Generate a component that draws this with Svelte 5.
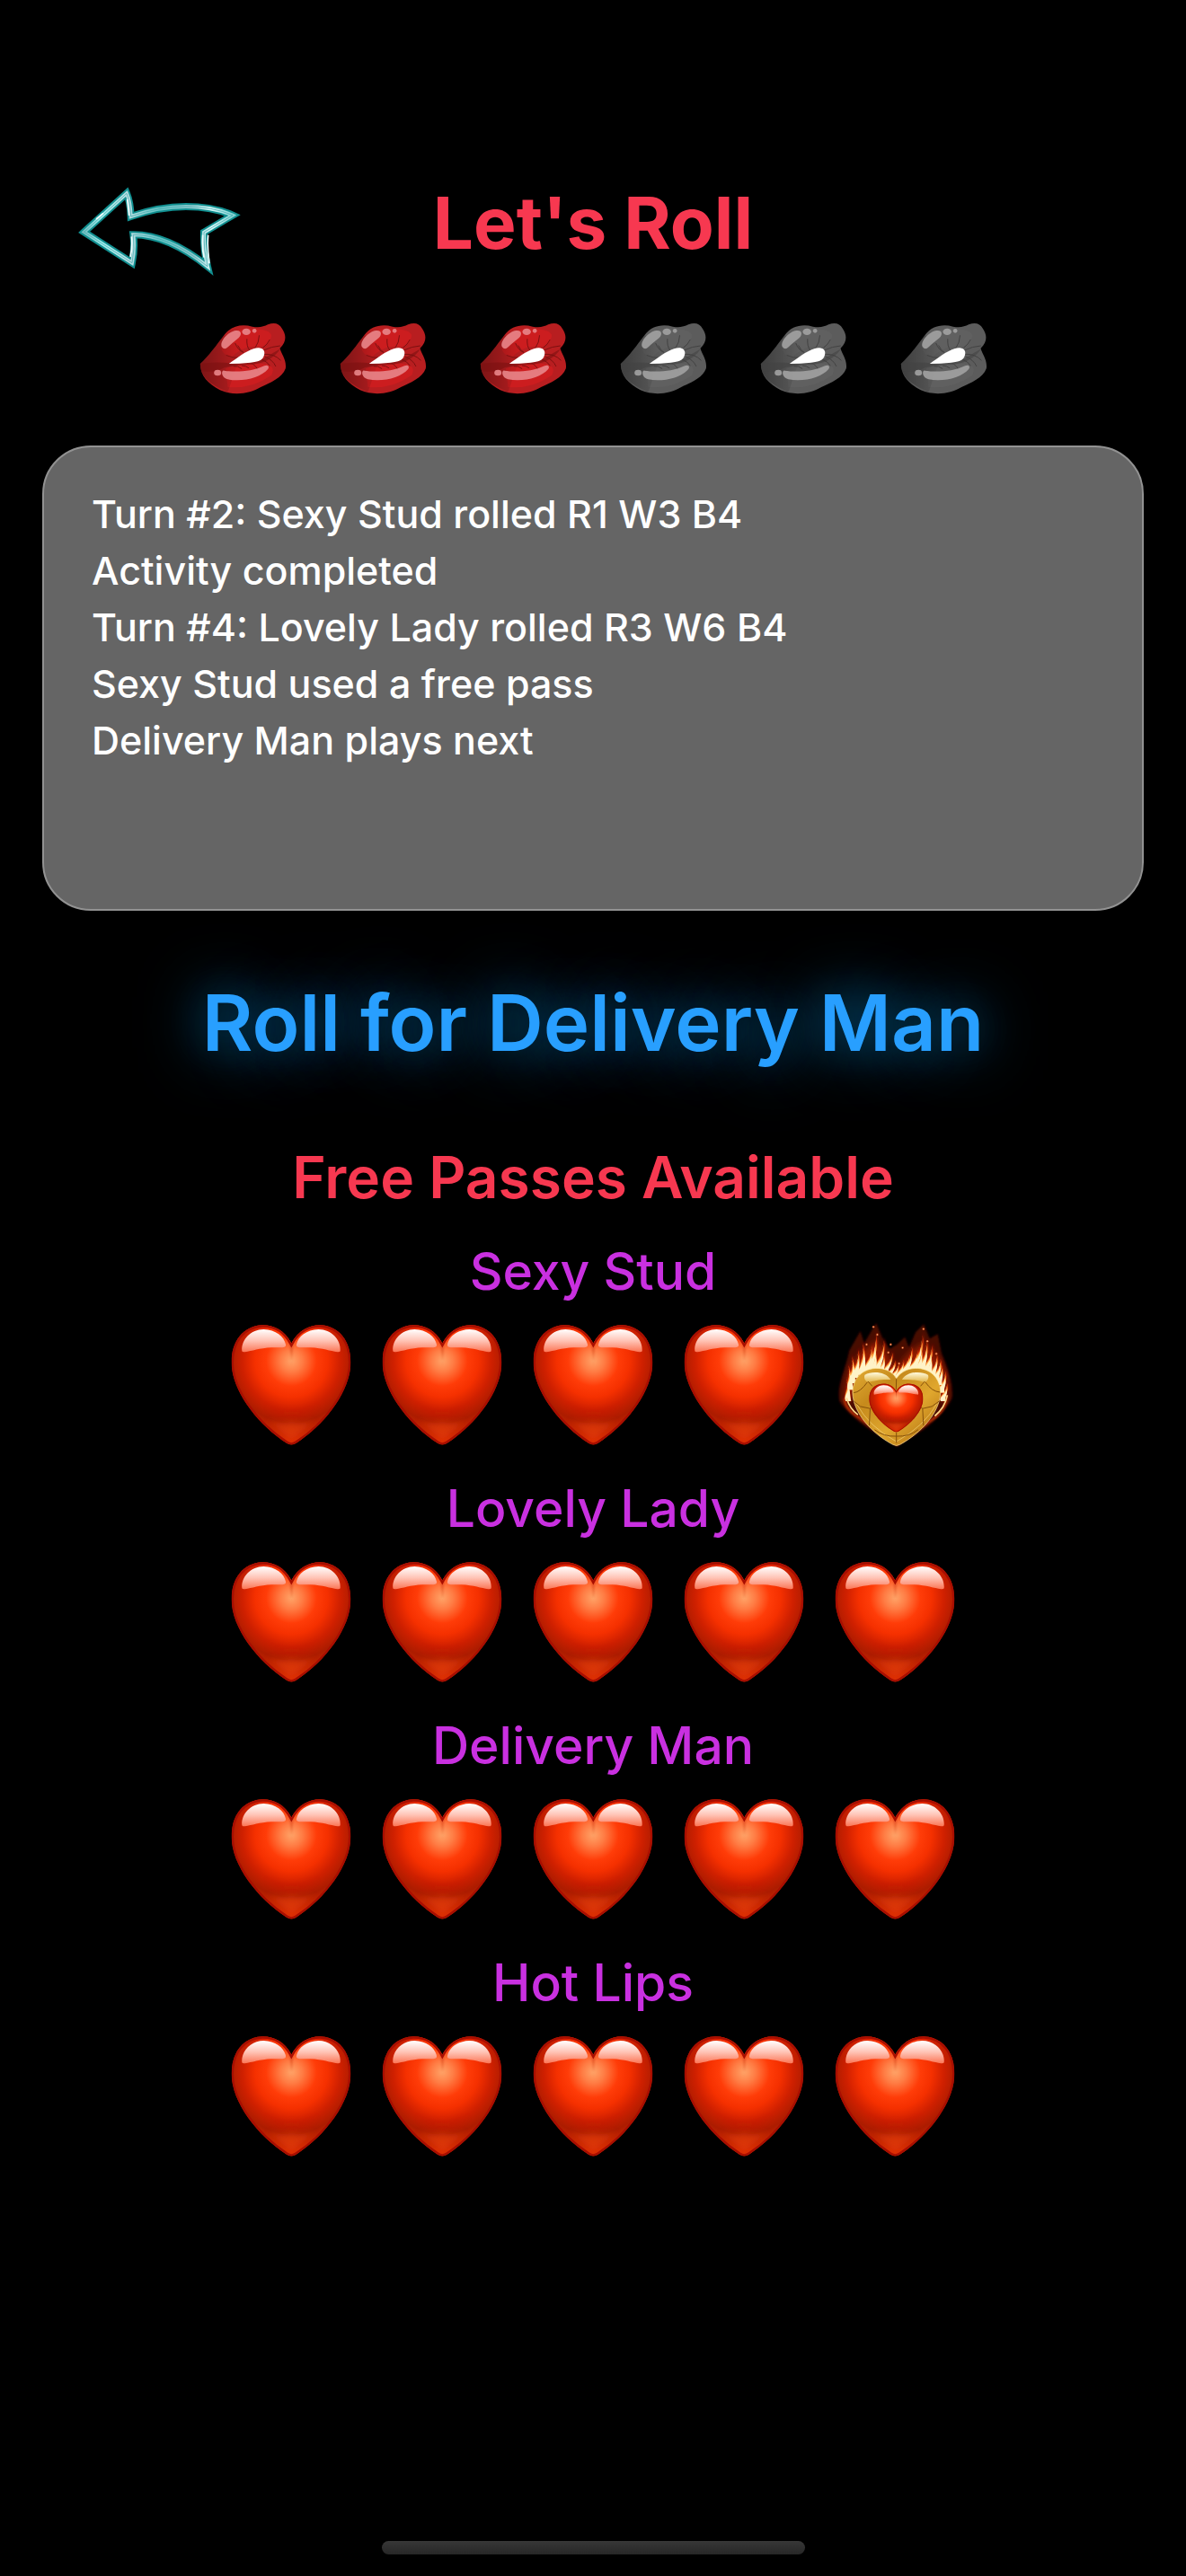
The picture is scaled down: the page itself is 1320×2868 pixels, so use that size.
<script>
    let turn = 3;
    const totalTurns = 6;
    const nextPlayer = 'Delivery Man';

    const log = [
        'Turn #2: Sexy Stud rolled R1 W3 B4',
        'Activity completed',
        'Turn #4: Lovely Lady rolled R3 W6 B4',
        'Sexy Stud used a free pass',
        'Delivery Man plays next'
    ];

    const players = [
        { name: 'Sexy Stud', passes: 4 },
        { name: 'Lovely Lady', passes: 5 },
        { name: 'Delivery Man', passes: 5 },
        { name: 'Hot Lips', passes: 5 }
    ];
    const maxPasses = 5;

    // base x, base y, tip x, tip y, half width
    const flames = [
        [72, 300, 66, 225, 9], [80, 262, 72, 180, 9], [88, 240, 84, 150, 9],
        [98, 222, 104, 128, 9], [110, 212, 126, 142, 8], [122, 206, 120, 108, 9],
        [135, 203, 150, 112, 8], [148, 202, 164, 76, 9], [160, 203, 160, 118, 8],
        [172, 204, 190, 96, 9], [185, 206, 190, 140, 8], [198, 210, 218, 135, 8],
        [212, 216, 228, 162, 8], [224, 222, 240, 172, 7], [240, 222, 256, 160, 8],
        [254, 214, 276, 142, 8], [268, 208, 284, 116, 9], [282, 204, 304, 128, 8],
        [296, 202, 320, 78, 9], [310, 202, 316, 112, 8], [322, 203, 334, 96, 9],
        [334, 206, 352, 112, 8], [346, 210, 346, 134, 8], [358, 218, 368, 142, 8],
        [368, 230, 380, 158, 9], [378, 246, 384, 178, 9], [386, 272, 396, 198, 9],
        [390, 300, 402, 238, 8]
    ];

    const sparks = [[156, 51], [169, 77], [214, 110], [206, 137], [254, 121], [324, 58], [337, 99], [367, 141], [133, 110], [242, 174]];

    function tongue([x, y, tx, ty, w], k) {
        const h = (y - ty) * k;
        const top = y - h;
        const tip = x + (tx - x) * k;
        return `M${x - w} ${y} C${x - w * 2} ${y - h * 0.4} ${tip + w} ${y - h * 0.55} ${tip} ${top}`
            + ` C${tip + w * 1.6} ${y - h * 0.6} ${x + w * 0.3} ${y - h * 0.4} ${x + w} ${y} Z`;
    }
</script>

<svg class="sprites" aria-hidden="true">
    <defs>
        <radialGradient id="heart-body" gradientUnits="userSpaceOnUse" cx="238" cy="165" r="265">
            <stop offset="0" stop-color="#ffa468" />
            <stop offset=".14" stop-color="#ff7c44" />
            <stop offset=".32" stop-color="#ff3c08" />
            <stop offset=".46" stop-color="#f53000" />
            <stop offset=".62" stop-color="#cf2000" />
            <stop offset=".78" stop-color="#ac1c00" />
            <stop offset="1" stop-color="#d92c04" />
        </radialGradient>
        <linearGradient id="heart-gloss" x1="0" y1="0" x2="0" y2="1">
            <stop offset="0" stop-color="#fff" />
            <stop offset=".5" stop-color="#ffc4b6" />
            <stop offset="1" stop-color="#fb7656" />
        </linearGradient>
        <linearGradient id="gold" x1="0" y1="0" x2="1" y2="1">
            <stop offset="0" stop-color="#e3ac35" />
            <stop offset=".3" stop-color="#c68a1c" />
            <stop offset=".6" stop-color="#e0a72e" />
            <stop offset="1" stop-color="#a86409" />
        </linearGradient>
        <linearGradient id="gold-gloss" x1="0" y1="0" x2="0" y2="1">
            <stop offset="0" stop-color="#fffbe0" />
            <stop offset="1" stop-color="#e2b548" />
        </linearGradient>
        <linearGradient id="lip-left">
            <stop offset="0" stop-color="#000" stop-opacity=".32" />
            <stop offset="1" stop-color="#000" stop-opacity="0" />
        </linearGradient>
        <linearGradient id="arrow-glass" gradientUnits="userSpaceOnUse" x1="60" y1="210" x2="590" y2="180">
            <stop offset="0" stop-color="#6fb9bd" />
            <stop offset=".13" stop-color="#9ff0ee" />
            <stop offset=".3" stop-color="#b8dde2" />
            <stop offset=".5" stop-color="#63c4c5" />
            <stop offset=".7" stop-color="#8fc8cc" />
            <stop offset=".82" stop-color="#d9fbfb" />
            <stop offset="1" stop-color="#6cc6c6" />
        </linearGradient>
        <filter id="soft" x="-30%" y="-30%" width="160%" height="160%">
            <feGaussianBlur stdDeviation="12" />
        </filter>
        <filter id="glow" x="-30%" y="-30%" width="160%" height="160%">
            <feGaussianBlur stdDeviation="4" />
        </filter>
        <clipPath id="heart-clip">
            <path d="M238 106 C262 62 300 44 335 45 C400 48 437 100 437 170 C437 265 352 378 254 441 Q238 452 222 441 C124 378 37 265 37 170 C37 100 75 48 140 45 C178 44 215 62 238 106Z" />
        </clipPath>
        <path id="heart-gloss-shape" d="M72 130 C70 94 102 59 145 59 C185 60 214 83 219 110 C221 124 200 119 172 120 C130 122 106 132 82 135 C74 136 72 134 72 130Z" />
    </defs>

    <symbol id="heart" viewBox="36 44 402 404">
        <g clip-path="url(#heart-clip)">
            <rect x="30" y="40" width="420" height="420" fill="url(#heart-body)" />
            <path d="M215 60 Q238 105 240 185 Q236 105 262 60Z" fill="#c22c0a" opacity=".45" filter="url(#glow)" />
            <path d="M150 312 Q238 362 328 312 Q290 344 238 346 Q188 344 150 312Z" fill="#b01400" opacity=".4" filter="url(#soft)" />
            <path d="M160 366 Q205 382 238 368 Q272 382 316 366 L238 430Z" fill="#ec450e" opacity=".55" filter="url(#soft)" />
            <path d="M238 106 C262 62 300 44 335 45 C400 48 437 100 437 170 C437 265 352 378 254 441 Q238 452 222 441 C124 378 37 265 37 170 C37 100 75 48 140 45 C178 44 215 62 238 106Z" fill="none" stroke="#a80e00" stroke-width="14" />
        </g>
        <use href="#heart-gloss-shape" fill="url(#heart-gloss)" />
        <use href="#heart-gloss-shape" transform="matrix(-1 0 0 1 474 0)" fill="url(#heart-gloss)" />
    </symbol>

    <symbol id="burning-heart" viewBox="27 44 402 404" overflow="visible">
        <path d="M233 448 C140 400 70 345 42 300 C32 250 60 200 75 130 L112 65 L125 105 L165 38 L185 85 L210 125 L235 110 L262 85 L275 120 L298 68 L325 42 L345 90 L372 75 L385 140 C405 190 425 240 420 290 C390 350 320 410 233 448Z" fill="#4a0900" filter="url(#glow)" />
        <path d="M60 310 C56 240 80 170 115 140 L160 100 L195 130 L232 190 L275 140 L320 105 L360 140 C395 180 410 250 400 310 L330 240 L233 240 L130 240Z" fill="#a32405" opacity=".8" filter="url(#soft)" />
        <g fill="#a01c03" filter="url(#glow)">
            {#each flames as flame}
                <path d={tongue(flame, 1.1)} />
            {/each}
        </g>
        <path d="M58 290 Q60 325 100 350 L235 448 L370 350 Q405 320 400 280" fill="none" stroke="#e33a08" stroke-width="5" filter="url(#glow)" />
        <g fill="#d93a0c">
            {#each flames as flame}
                <path d={tongue(flame, 1)} />
            {/each}
        </g>
        <g fill="#ffb04a">
            {#each flames as flame}
                <path d={tongue(flame, 0.86)} />
            {/each}
        </g>
        <g fill="#fff3c8">
            {#each flames as flame}
                <path d={tongue(flame, 0.68)} />
            {/each}
        </g>
        <path d="M66 290 Q76 326 104 346 M404 280 Q396 322 362 350" fill="none" stroke="#ffd98c" stroke-width="5" />
        <path d="M233 224 C250 198 278 189 306 190 C355 194 381 230 381 272 C378 340 315 408 245 446 Q233 453 221 446 C150 408 88 340 86 272 C86 230 112 194 162 190 C190 189 218 198 233 224Z" fill="url(#gold)" stroke="#ffe9a0" stroke-width="2" />
        <path d="M100 310 Q140 385 233 436 Q326 385 368 310" fill="none" stroke="#f8dc86" stroke-width="3" opacity=".6" />
        <path d="M127 212 C150 198 198 200 214 228 C180 226 158 232 142 236 C130 238 122 222 127 212Z" fill="url(#gold-gloss)" />
        <path d="M339 212 C316 198 268 200 252 228 C286 226 308 232 324 236 C336 238 344 222 339 212Z" fill="url(#gold-gloss)" />
        <g fill="none" stroke="#85500a" stroke-width="3">
            <path d="M233 226 L232 262 M138 234 L152 250 M136 236 Q112 270 90 272 M328 234 L314 250 M330 236 Q352 268 379 270" />
            <path d="M142 382 L145 325 L112 318 L90 300 M145 325 L156 318 M324 382 L321 325 L352 318 L377 300 M321 325 L310 318" />
            <path d="M160 396 Q190 420 233 418 Q276 420 306 396 M233 405 L233 440" />
        </g>
        <g transform="translate(141 241) scale(.453 .406)">
            <use href="#heart" width="402" height="404" />
        </g>
        {#each sparks as [x, y]}
            <circle cx={x} cy={y} r="4" fill="#c44415" />
            <circle cx={x} cy={y} r="2" fill="#ffd0a0" />
        {/each}
    </symbol>

    <symbol id="lips" viewBox="36 42 290 240">
        <path class="lip-base" d="M38 180 C66 155 92 118 118 84 C140 54 176 46 212 56 C236 60 250 56 264 49 C284 41 302 44 311 62 C325 82 328 106 304 128 C309 148 327 166 323 196 C312 228 270 244 240 258 C204 280 150 288 104 268 C64 246 38 220 38 180Z" />
        <path class="lip-bright" d="M110 120 C130 75 175 58 215 62 C255 66 270 70 276 84 C274 105 265 118 240 124 C200 118 170 130 142 160 C120 150 105 140 110 120Z" />
        <path class="lip-bright" d="M122 196 Q190 170 262 182 Q290 190 276 218 Q210 265 130 258Z" />
        <path d="M38 180 C66 155 92 118 118 84 L180 130 L130 275 C64 246 38 220 38 180Z" fill="url(#lip-left)" />
        <path class="lip-dark" d="M38 180 Q90 172 136 178 Q190 182 246 166 Q270 150 306 130 Q274 176 214 182 Q160 184 120 192 Q84 212 42 204 Q38 194 38 180Z" />
        <path class="lip-crease" d="M126 152 Q146 162 170 160 M155 112 Q164 136 182 142 M164 120 Q170 134 182 142 M194 98 Q192 120 202 134 M235 86 Q234 110 222 126 M270 100 Q262 116 248 126 M304 120 Q276 122 252 134 M250 148 Q286 146 306 168 M254 156 Q280 166 290 188 M244 166 Q262 172 270 186 M206 176 Q226 186 232 204 M150 188 Q164 186 176 196 M178 186 Q190 186 200 194" />
        <path class="lip-mouth" d="M134 180 C160 162 190 138 216 130 C240 120 258 132 251 152 C246 170 232 172 206 176 Q170 180 134 180Z" />
        <path class="lip-shine" d="M110 124 C102 108 126 78 152 70 C174 64 180 80 166 94 C148 108 138 118 128 126 Q118 134 110 124Z" />
        <ellipse class="lip-shine" cx="192" cy="73" rx="14" ry="11" />
        <circle class="lip-shine" cx="219" cy="70" r="7" />
        <ellipse class="lip-shine" cx="96" cy="210" rx="12" ry="10" />
        <path class="lip-shine" d="M118 203 C150 208 210 208 252 187 C264 182 270 190 264 198 C240 226 180 242 130 232 C106 226 108 200 118 203Z" />
    </symbol>
</svg>

<main class="game">
    <header class="game__header">
        <button class="game__back" aria-label="Back">
            <svg viewBox="50 54 546 300" aria-hidden="true">
                <g fill="none" stroke-linejoin="miter" stroke-miterlimit="6">
                    <path d="M70 205 L212 76 Q224 104 226 153 Q320 120 410 120 Q500 120 566 149 L470 206 Q468 260 482 320 Q350 214 234 214 Q240 260 230 308 Z" stroke="#118f90" stroke-width="24" />
                    <path d="M70 205 L212 76 Q224 104 226 153 Q320 120 410 120 Q500 120 566 149 L470 206 Q468 260 482 320 Q350 214 234 214 Q240 260 230 308 Z" stroke="url(#arrow-glass)" stroke-width="12" />
                    <path d="M70 205 L212 76 Q224 104 226 153 Q320 120 410 120 Q500 120 566 149 L470 206 Q468 260 482 320 Q350 214 234 214 Q240 260 230 308 Z" stroke="#3aa6aa" stroke-width="2" />
                </g>
                <path d="M110 162 L134 142 M466 215 Q462 255 470 290 M484 215 Q480 255 488 310 M228 220 Q232 255 224 288 M214 96 L220 150" fill="none" stroke="#f2ffff" stroke-width="5" />
            </svg>
        </button>
        <h1 class="game__title">Let's Roll</h1>
    </header>

    <div class="game__turns" role="img" aria-label="{turn} of {totalTurns}">
        {#each Array(totalTurns) as _, i}
            <svg class="game__lips" class:game__lips_off={i >= turn}><use href="#lips" /></svg>
        {/each}
    </div>

    <section class="game__log">
        {#each log as line}
            <p>{line}</p>
        {/each}
    </section>

    <button class="game__roll">Roll for {nextPlayer}</button>

    <section class="game__passes">
        <h2 class="game__subtitle">Free Passes Available</h2>
        {#each players as player}
            <div class="game__player">
                <h3 class="game__name">{player.name}</h3>
                <div class="game__hearts">
                    {#each Array(maxPasses) as _, i}
                        <svg class="game__heart"><use href={i < player.passes ? '#heart' : '#burning-heart'} /></svg>
                    {/each}
                </div>
            </div>
        {/each}
    </section>

    <div class="game__indicator"></div>
</main>

<style>
    :global(body) {
        background: #000;
    }
    .sprites {
        position: absolute;
        width: 0;
        height: 0;
    }
    .game {
        box-sizing: border-box;
        display: flex;
        flex-direction: column;
        min-height: 100vh;
        padding: 200px 47px 24px;
        background: #000;
        color: #fff;
        font-family: Inter, 'Liberation Sans', sans-serif;
    }
    h1, h2, h3, p {
        margin: 0;
    }
    button {
        padding: 0;
        border: 0;
        background: none;
        font-family: inherit;
        cursor: pointer;
    }
    .game__header {
        display: grid;
        grid-template-columns: 1fr auto 1fr;
        padding: 0 40px;
    }
    .game__back {
        justify-self: start;
        padding-top: 8px;
    }
    .game__back svg {
        display: block;
        width: 182px;
        height: 100px;
    }
    .game__title {
        color: #f73850;
        font-size: 80px;
        font-weight: 700;
        line-height: 96px;
    }
    .game__turns {
        display: flex;
        justify-content: center;
        gap: 59px;
        margin-top: 51px;
    }
    .game__lips {
        --lip: #b81e20;
        --lip-bright: #d41c20;
        --lip-dark: #7c1010;
        --lip-shine: #e8868a;
        width: 97px;
        height: 80px;
    }
    .game__lips_off {
        --lip: #5c5c5c;
        --lip-bright: #626262;
        --lip-dark: #424242;
        --lip-shine: #a2a2a2;
    }
    .lip-base {
        fill: var(--lip);
    }
    .lip-bright {
        fill: var(--lip-bright);
        opacity: .7;
    }
    .lip-dark {
        fill: var(--lip-dark);
        opacity: .6;
    }
    .lip-crease {
        fill: none;
        stroke: var(--lip-dark);
        stroke-width: 3px;
        stroke-linecap: round;
    }
    .lip-mouth {
        fill: #fff;
    }
    .lip-shine {
        fill: var(--lip-shine);
        opacity: .9;
    }
    .game__log {
        box-sizing: border-box;
        min-height: 518px;
        margin-top: 57px;
        padding: 43px 53px;
        border: 2px solid #929292;
        border-radius: 54px;
        background: #656565;
        font-size: 43px;
        font-weight: 500;
        line-height: 63px;
    }
    .game__roll {
        align-self: center;
        margin-top: 70px;
        color: #289fff;
        font-size: 87px;
        font-weight: 600;
        line-height: 110px;
        text-shadow: 0 0 70px #0a6a9c, 0 0 50px #04283e;
    }
    .game__passes {
        margin-top: 77px;
        text-align: center;
    }
    .game__subtitle {
        margin-bottom: 30px;
        color: #f73850;
        font-size: 64px;
        font-weight: 600;
        line-height: 80px;
    }
    .game__player {
        margin-bottom: 36px;
    }
    .game__name {
        margin-bottom: 24px;
        color: #c930e0;
        font-size: 57px;
        font-weight: 500;
        line-height: 70px;
    }
    .game__hearts {
        display: flex;
        justify-content: center;
        gap: 34px;
    }
    .game__heart {
        width: 134px;
        height: 134px;
        overflow: visible;
    }
    .game__indicator {
        align-self: center;
        width: 471px;
        height: 15px;
        margin-top: auto;
        border-radius: 8px;
        background: linear-gradient(#373737, #272727);
    }
</style>
